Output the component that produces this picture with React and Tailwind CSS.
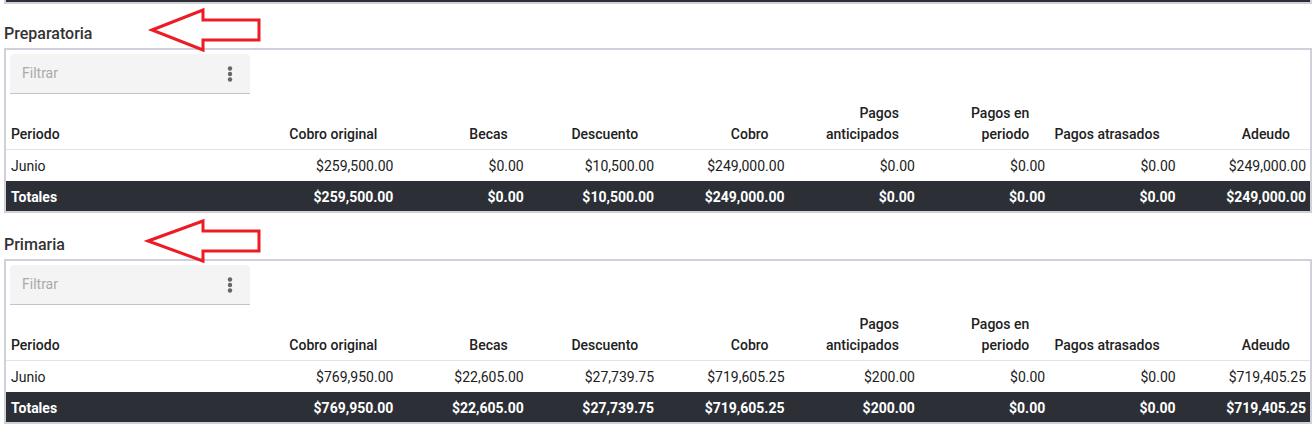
import React from 'react';

const HEADERS = [
  'Cobro original',
  'Becas',
  'Descuento',
  'Cobro',
  ['Pagos', 'anticipados'],
  ['Pagos en', 'periodo'],
  'Pagos atrasados',
  'Adeudo',
];

const SECTIONS = [
  {
    title: 'Preparatoria',
    pad: 'pt-[18px]',
    arrow: { tip: 152, top: 6 },
    row: ['$259,500.00', '$0.00', '$10,500.00', '$249,000.00', '$0.00', '$0.00', '$0.00', '$249,000.00'],
    totals: ['$259,500.00', '$0.00', '$10,500.00', '$249,000.00', '$0.00', '$0.00', '$0.00', '$249,000.00'],
  },
  {
    title: 'Primaria',
    pad: 'pt-[20px]',
    arrow: { tip: 148, top: 8 },
    row: ['$769,950.00', '$22,605.00', '$27,739.75', '$719,605.25', '$200.00', '$0.00', '$0.00', '$719,405.25'],
    totals: ['$769,950.00', '$22,605.00', '$27,739.75', '$719,605.25', '$200.00', '$0.00', '$0.00', '$719,405.25'],
  },
];

// outlined red arrow pointing left (annotation over the page)
function Arrow({ tip, top }) {
  const h = 40;
  const pts = [
    [tip, top + h / 2],
    [203, top],
    [203, top + 10],
    [259, top + 10],
    [259, top + 30],
    [203, top + 30],
    [203, top + h],
  ]
    .map((p) => p.join(','))
    .join(' ');
  return (
    <svg className="absolute left-0 top-0 pointer-events-none z-10" width="270" height="60">
      <polygon points={pts} fill="white" stroke="#ed1c24" strokeWidth="3" strokeLinejoin="miter" />
    </svg>
  );
}

function Kebab() {
  return (
    <svg width="6" height="16" viewBox="0 0 6 16">
      <circle cx="3" cy="2.5" r="2.2" fill="#666" />
      <circle cx="3" cy="8" r="2.2" fill="#666" />
      <circle cx="3" cy="13.5" r="2.2" fill="#666" />
    </svg>
  );
}

const GRID = 'grid grid-cols-[261px_repeat(8,minmax(0,1fr))]';

function Section({ s }) {
  return (
    <section className={`relative ${s.pad}`}>
      <Arrow tip={s.arrow.tip} top={s.arrow.top} />
      <h2 className="pl-[4px] mb-[2px] text-[16px] leading-[24px] font-medium text-[#333]">{s.title}</h2>
      <div className="ml-[4px] mr-[1px] border-2 border-[#cfd0da]">
        <div className="pl-[4px] pt-[4px]">
          <div className="w-[240px] h-[40px] bg-[#f4f4f4] border-b border-[#c4c4c4] rounded-t-[4px] flex items-center justify-between pl-[12px] pr-[17px]">
            <span className="text-[14px] text-[#aaa]">Filtrar</span>
            <Kebab />
          </div>
        </div>

        {/* header */}
        <div className={`${GRID} h-[56px] border-b border-[#e3e3e3] items-end pb-[4px] text-[14px] leading-[21px] font-medium text-[#212121]`}>
          <div className="pl-[5px]">Periodo</div>
          {HEADERS.map((h, i) => (
            <div key={i} className="text-right pr-[20px]">
              {Array.isArray(h) ? (
                <>
                  {h[0]}
                  <br />
                  {h[1]}
                </>
              ) : (
                h
              )}
            </div>
          ))}
        </div>

        {/* data row */}
        <div className={`${GRID} h-[31px] items-center text-[14px] leading-[20px] text-[#212121]`}>
          <div className="pl-[5px]">Junio</div>
          {s.row.map((v, i) => (
            <div key={i} className="text-right pr-[4px]">{v}</div>
          ))}
        </div>

        {/* totals */}
        <div className={`${GRID} h-[30px] items-center bg-[#2c2f36] text-white font-bold text-[14px] leading-[20px]`}>
          <div className="pl-[5px] pt-[1px]">Totales</div>
          {s.totals.map((v, i) => (
            <div key={i} className="text-right pr-[4px] pt-[1px]">{v}</div>
          ))}
        </div>
      </div>
    </section>
  );
}

export default function App() {
  return (
    <div className="w-[1313px] h-[428px] overflow-hidden bg-white font-['Roboto',sans-serif]">
      {/* tail of the previous table */}
      <div className="ml-[4px] mr-[1px] border-x-2 border-b-2 border-[#cfd0da]">
        <div className="h-[2px] bg-[#2c2f36]" />
      </div>
      {SECTIONS.map((s) => (
        <Section key={s.title} s={s} />
      ))}
    </div>
  );
}
